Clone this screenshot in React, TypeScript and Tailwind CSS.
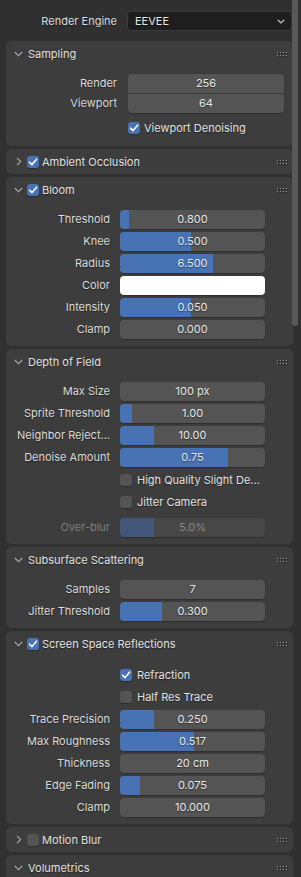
import React from "react";

const FONT = "font-['Inter','Noto_Sans',sans-serif]";
const SHADOW = "[text-shadow:0_1px_1px_rgba(0,0,0,0.45)]";
const TXT = "text-[11px]";

function Check({ on }: { on: boolean }) {
  return (
    <div
      className={`w-[12px] h-[12px] rounded-[3px] flex items-center justify-center shrink-0 ${
        on ? "bg-[#4772b3]" : "bg-[#545454]"
      } shadow-[0_1px_1px_rgba(0,0,0,0.3)]`}
    >
      {on && (
        <svg width="10" height="10" viewBox="0 0 10 10">
          <path d="M1.6 5.2 L4 7.6 L8.6 2.2" stroke="#ffffff" strokeWidth="1.6" fill="none" strokeLinecap="round" strokeLinejoin="round" />
        </svg>
      )}
    </div>
  );
}

function Dots() {
  return (
    <div className="absolute left-[271px] top-1/2 -translate-y-1/2 grid grid-cols-4 gap-x-[2px] gap-y-[2px]">
      {Array.from({ length: 8 }).map((_, i) => (
        <div key={i} className="w-[1px] h-[1px] bg-[#9a9a9a] shadow-[1px_1px_0_#1e1e1e]" />
      ))}
    </div>
  );
}

function ChevDown() {
  return (
    <svg width="9" height="6" viewBox="0 0 9 6" className="shrink-0">
      <path d="M0.8 1 L4.5 4.7 L8.2 1" stroke="#a8a8a8" strokeWidth="1.1" fill="none" />
    </svg>
  );
}

function ChevRight() {
  return (
    <svg width="6" height="9" viewBox="0 0 6 9" className="shrink-0">
      <path d="M1 0.8 L4.7 4.5 L1 8.2" stroke="#a8a8a8" strokeWidth="1.1" fill="none" />
    </svg>
  );
}

function Header({
  title,
  open,
  check,
}: {
  title: string;
  open: boolean;
  check?: boolean;
}) {
  const hasCheck = check !== undefined;
  return (
    <div className="relative h-[25px] flex items-center">
      {open ? (
        <div className="ml-[8px] w-[9px] flex items-center">
          <ChevDown />
        </div>
      ) : (
        <div className="ml-[10px] w-[7px] flex items-center">
          <ChevRight />
        </div>
      )}
      {hasCheck ? (
        <>
          <div className="ml-[4px]">
            <Check on={!!check} />
          </div>
          <span className={`ml-[3px] ${TXT} text-[#e2e2e2] ${SHADOW} translate-y-[1px]`}>{title}</span>
        </>
      ) : (
        <span className={`ml-[5px] ${TXT} text-[#e2e2e2] ${SHADOW} translate-y-[1px]`}>{title}</span>
      )}
      <Dots />
    </div>
  );
}

function Field({
  label,
  value,
  fill,
  disabled,
  white,
}: {
  label: string;
  value?: string;
  fill?: number;
  disabled?: boolean;
  white?: boolean;
}) {
  return (
    <div className="flex items-center h-[19px]">
      <div
        className={`w-[104px] text-right ${TXT} whitespace-nowrap ${
          disabled ? "text-[#7c7c7c]" : `text-[#dcdcdc] ${SHADOW}`
        }`}
      >
        {label}
      </div>
      <div
        className={`relative ml-[10px] w-[145px] h-[19px] rounded-[4px] overflow-hidden shadow-[0_1px_1px_rgba(0,0,0,0.25)] ${
          white ? "bg-white" : disabled ? "bg-[#474747]" : "bg-[#545454]"
        }`}
      >
        {fill !== undefined && (
          <div
            className={`absolute left-0 top-0 bottom-0 ${disabled ? "bg-[#42567a]" : "bg-[#4772b3]"}`}
            style={{ width: `${fill}px` }}
          />
        )}
        {value && (
          <div
            className={`relative h-full flex items-center justify-center ${TXT} ${
              disabled ? "text-[#8a8a8a]" : `text-[#e8e8e8] ${SHADOW}`
            }`}
          >
            {value}
          </div>
        )}
      </div>
    </div>
  );
}

function CheckRow({ label, on }: { label: string; on: boolean }) {
  return (
    <div className="flex items-center h-[22px] pl-[114px]">
      <Check on={on} />
      <span className={`ml-[5px] ${TXT} text-[#e2e2e2] whitespace-nowrap ${SHADOW}`}>{label}</span>
    </div>
  );
}

function Panel({ children }: { children: React.ReactNode }) {
  return <div className="ml-[6px] w-[287px] rounded-[5px] bg-[#3d3d3d]">{children}</div>;
}

export default function App() {
  return (
    <div className={`relative w-[301px] h-[877px] overflow-hidden bg-[#303030] ${FONT}`}>
      {/* Render engine */}
      <div className="flex items-center pt-[11px] h-[31px]">
        <div className={`w-[117px] text-right ${TXT} text-[#dcdcdc] ${SHADOW}`}>Render Engine</div>
        <div className="ml-[10px] w-[165px] h-[20px] rounded-[4px] bg-[#1e1e1e] border border-[#3a3a3a] flex items-center pl-[7px] pr-[6px]">
          <span className={`flex-1 ${TXT} text-[#e8e8e8] ${SHADOW}`}>EEVEE</span>
          <svg width="8" height="5" viewBox="0 0 8 5">
            <path d="M0.8 0.8 L4 4 L7.2 0.8" stroke="#d0d0d0" strokeWidth="1.2" fill="none" />
          </svg>
        </div>
      </div>

      <div className="mt-[10px] flex flex-col gap-[3px]">
        {/* Sampling */}
        <Panel>
          <Header title="Sampling" open />
          <div className="pt-[8px] pb-[7px]">
            <div className="flex">
              <div className="w-[111px] flex flex-col gap-[1px]">
                <div className={`h-[19px] flex items-center justify-end ${TXT} text-[#dcdcdc] ${SHADOW}`}>Render</div>
                <div className={`h-[19px] flex items-center justify-end ${TXT} text-[#dcdcdc] ${SHADOW}`}>Viewport</div>
              </div>
              <div className="ml-[11px] w-[156px] flex flex-col gap-[1px] shadow-[0_1px_1px_rgba(0,0,0,0.25)] rounded-[4px] bg-[#3a3a3a]">
                <div className={`h-[19px] rounded-t-[4px] bg-[#545454] flex items-center justify-center ${TXT} text-[#e8e8e8] ${SHADOW}`}>256</div>
                <div className={`h-[19px] rounded-b-[4px] bg-[#545454] flex items-center justify-center ${TXT} text-[#e8e8e8] ${SHADOW}`}>64</div>
              </div>
            </div>
            <div className="mt-[4px] flex items-center h-[22px] pl-[122px]">
              <Check on />
              <span className={`ml-[4px] ${TXT} text-[#e2e2e2] ${SHADOW}`}>Viewport Denoising</span>
            </div>
          </div>
        </Panel>

        {/* Ambient Occlusion */}
        <Panel>
          <Header title="Ambient Occlusion" open={false} check />
        </Panel>

        {/* Bloom */}
        <Panel>
          <Header title="Bloom" open check />
          <div className="pt-[8px] pb-[7px] flex flex-col gap-[3px]">
            <Field label="Threshold" value="0.800" fill={9} />
            <Field label="Knee" value="0.500" fill={71} />
            <Field label="Radius" value="6.500" fill={93} />
            <Field label="Color" white />
            <Field label="Intensity" value="0.050" fill={71} />
            <Field label="Clamp" value="0.000" />
          </div>
        </Panel>

        {/* Depth of Field */}
        <Panel>
          <Header title="Depth of Field" open />
          <div className="pt-[8px] pb-[7px]">
            <div className="flex flex-col gap-[3px]">
              <Field label="Max Size" value="100 px" />
              <Field label="Sprite Threshold" value="1.00" fill={12} />
              <Field label="Neighbor Reject..." value="10.00" fill={34} />
              <Field label="Denoise Amount" value="0.75" fill={108} />
            </div>
            <div className="mt-[2px]">
              <CheckRow label="High Quality Slight De..." on={false} />
              <CheckRow label="Jitter Camera" on={false} />
            </div>
            <div className="mt-[5px]">
              <Field label="Over-blur" value="5.0%" fill={34} disabled />
            </div>
          </div>
        </Panel>

        {/* Subsurface Scattering */}
        <Panel>
          <Header title="Subsurface Scattering" open />
          <div className="pt-[8px] pb-[7px] flex flex-col gap-[3px]">
            <Field label="Samples" value="7" />
            <Field label="Jitter Threshold" value="0.300" fill={42} />
          </div>
        </Panel>

        {/* Screen Space Reflections */}
        <Panel>
          <Header title="Screen Space Reflections" open check />
          <div className="pt-[8px] pb-[7px]">
            <CheckRow label="Refraction" on />
            <CheckRow label="Half Res Trace" on={false} />
            <div className="mt-[2px] flex flex-col gap-[3px]">
              <Field label="Trace Precision" value="0.250" fill={34} />
              <Field label="Max Roughness" value="0.517" fill={74} />
              <Field label="Thickness" value="20 cm" />
              <Field label="Edge Fading" value="0.075" fill={20} />
              <Field label="Clamp" value="10.000" />
            </div>
          </div>
        </Panel>

        {/* Motion Blur */}
        <Panel>
          <Header title="Motion Blur" open={false} check={false} />
        </Panel>

        {/* Volumetrics */}
        <Panel>
          <Header title="Volumetrics" open />
          <div className="h-[40px]" />
        </Panel>
      </div>

      {/* scrollbar thumb */}
      <div className="absolute left-[292px] top-[-6px] w-[6px] h-[332px] rounded-[3px] bg-[#595959]" />
    </div>
  );
}
